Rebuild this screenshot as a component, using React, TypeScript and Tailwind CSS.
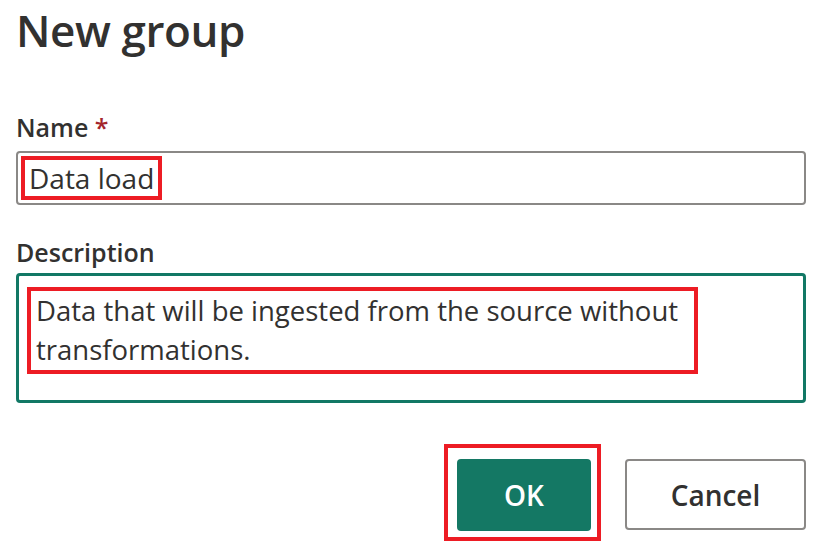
export default function App() {
  const font = "font-['Open_Sans','Noto_Sans',sans-serif]";
  return (
    <main className={`w-[820px] h-[547px] overflow-hidden bg-white text-[#323130] ${font}`}>
      <div className="flex flex-col pl-4 pr-[14px]">
        <h1 className="text-[44px] leading-[60px] font-semibold tracking-[-0.4px]">
          New group
        </h1>

        <label className="mt-[54px] text-[25px] leading-[26px] font-semibold">
          Name <span className="text-[#a4262c]">*</span>
        </label>
        <div className="mt-[11px] h-[54px] flex items-center rounded-[4px] border-2 border-[#8a8886] pl-[3px]">
          <span className="border-4 border-[#ed1c24] h-[44px] flex items-center px-[4px] text-[28px] leading-none">
            Data load
          </span>
        </div>

        <label className="mt-[34px] text-[25px] leading-[26px] font-semibold">
          Description
        </label>
        <div className="mt-[8px] h-[130px] rounded-[4px] border-[3px] border-[#117865] pl-[8px] pt-[11px]">
          <div className="inline-block border-4 border-[#ed1c24] pl-[5px] pr-[16px] pt-0 pb-[1px] text-[27.5px] leading-[39px]">
            Data that will be ingested from the source without
            <br />
            transformations.
          </div>
        </div>

        <div className="mt-[41px] flex justify-end items-start gap-[24px]">
          <div className="border-4 border-[#ed1c24] pt-[11px] pl-[9px] pr-[6px] pb-[6px]">
            <button
              type="button"
              className="w-[134px] h-[72px] rounded-[4px] bg-[#147864] text-white text-[28px] font-semibold"
            >
              OK
            </button>
          </div>
          <button
            type="button"
            className="mt-[15px] w-[181px] h-[71px] rounded-[4px] border-2 border-[#8a8886] bg-white text-[28px] font-semibold"
          >
            Cancel
          </button>
        </div>
      </div>
    </main>
  );
}
